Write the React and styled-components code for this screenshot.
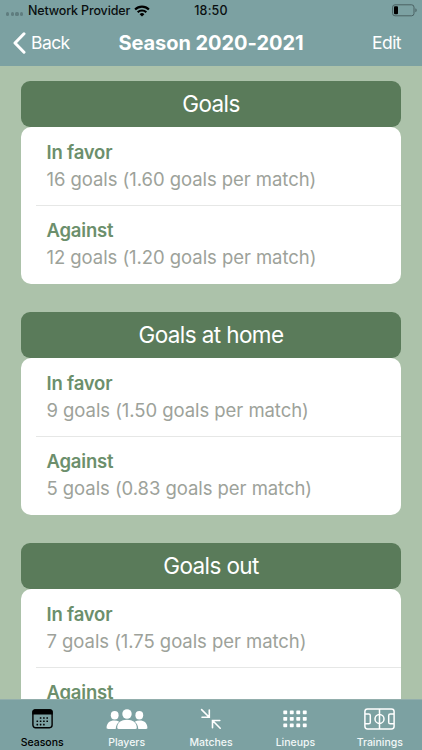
import React from 'react'
import styled, { createGlobalStyle } from 'styled-components'

const stats = [
  {
    title: 'Goals',
    rows: [
      ['In favor', '16 goals (1.60 goals per match)'],
      ['Against', '12 goals (1.20 goals per match)'],
    ],
  },
  {
    title: 'Goals at home',
    rows: [
      ['In favor', '9 goals (1.50 goals per match)'],
      ['Against', '5 goals (0.83 goals per match)'],
    ],
  },
  {
    title: 'Goals out',
    rows: [
      ['In favor', '7 goals (1.75 goals per match)'],
      ['Against'],
    ],
  },
]

const App = () => (
  <Screen>
    <GlobalStyle />
    <Header>
      <StatusBar>
        <Carrier>
          <Signal>
            <Dot />
            <Dot />
            <Dot />
            <Dot />
          </Signal>
          <Provider>Network Provider</Provider>
          <WifiIcon />
        </Carrier>
        <Clock>18:50</Clock>
        <Power>
          <BatteryIcon />
        </Power>
      </StatusBar>
      <NavBar>
        <BackButton>
          <BackIcon />
          Back
        </BackButton>
        <NavTitle>Season 2020-2021</NavTitle>
        <EditButton>Edit</EditButton>
      </NavBar>
    </Header>
    <Content>
      {stats.map(({ title, rows }) => (
        <Section key={title}>
          <SectionTitle>{title}</SectionTitle>
          <Card>
            {rows.map(([label, value]) => (
              <Row key={label}>
                <Label>{label}</Label>
                {value && <Value>{value}</Value>}
              </Row>
            ))}
          </Card>
        </Section>
      ))}
    </Content>
    <TabBar>
      {tabs.map(({ name, Icon }) => (
        <Tab key={name} $active={name === 'Seasons'}>
          <IconBox>
            <Icon />
          </IconBox>
          {name}
        </Tab>
      ))}
    </TabBar>
  </Screen>
)

const WifiIcon = () => (
  <svg width="16" height="12" viewBox="0 0 16 12" fill="none">
    <path d="M1.1 4.5a9.8 9.8 0 0 1 13.8 0" stroke="#000" strokeWidth="2.2" />
    <path d="M3.7 7.2a6.1 6.1 0 0 1 8.6 0" stroke="#000" strokeWidth="2.1" />
    <path d="M8 11.6 5.6 9.2a3.4 3.4 0 0 1 4.8 0z" fill="#000" />
  </svg>
)

const BatteryIcon = () => (
  <svg width="26" height="13" viewBox="0 0 26 13" fill="none">
    <rect x="0.6" y="0.8" width="21.4" height="11" rx="2.4" stroke="#4a6163" />
    <rect x="2" y="2.3" width="4" height="8" rx="1" fill="#000" />
    <path d="M23.4 4.3c1.7.6 1.7 3.4 0 4z" fill="#4a6163" />
  </svg>
)

const BackIcon = () => (
  <svg width="13" height="22" viewBox="0 0 13 22" fill="none">
    <path
      d="M11 1.8 2 11l9 9.2"
      stroke="#fff"
      strokeWidth="3"
      strokeLinecap="round"
      strokeLinejoin="round"
    />
  </svg>
)

const calendarDots = [
  [7.8, 9], [11.1, 9], [14.4, 9],
  [4.5, 12.3], [7.8, 12.3], [11.1, 12.3], [14.4, 12.3],
  [4.5, 15.6], [7.8, 15.6], [11.1, 15.6],
]

const SeasonsIcon = () => (
  <svg width="21" height="20" viewBox="0 0 21 20" fill="none">
    <rect x="0.9" y="0.9" width="19.2" height="17.8" rx="2.6" stroke="#000" strokeWidth="1.4" />
    <path d="M.3 5.6V3A2.8 2.8 0 0 1 3 .2h15A2.8 2.8 0 0 1 20.7 3v2.6z" fill="#000" />
    {calendarDots.map(([x, y]) => (
      <rect key={`${x}-${y}`} x={x} y={y - 0.8} width="1.6" height="1.6" rx="0.3" fill="#000" />
    ))}
  </svg>
)

const PlayersIcon = () => (
  <svg width="42" height="21" viewBox="0 0 42 21" fill="#fff">
    <ellipse cx="8.7" cy="6.2" rx="3.9" ry="4.2" />
    <ellipse cx="33.3" cy="6.2" rx="3.9" ry="4.2" />
    <path d="M.6 18.7c0-4.6 3.2-7.2 7.8-7.2 1.9 0 3.5.4 4.9 1.200-2 1.500-3.300 3.600-3.600 7.200H2C1 19.900.6 19.500.6 18.700z" />
    <path d="M41.4 18.700c0-4.600-3.200-7.200-7.800-7.200-1.900 0-3.500.4-4.900 1.200 2 1.500 3.300 3.600 3.600 7.200H40c1 0 1.400-.4 1.400-1.200z" />
    <ellipse cx="21" cy="5" rx="4.700" ry="4.800" />
    <path d="M11.200 18.700c0-4.900 4-7.900 9.800-7.900s9.800 3 9.800 7.900c0 .8-.4 1.200-1.400 1.200H12.600c-1 0-1.400-.4-1.400-1.200z" />
  </svg>
)

const MatchesIcon = () => (
  <svg width="22" height="22" viewBox="0 0 22 22" fill="none" stroke="#fff" strokeWidth="1.6">
    <path d="M1.6 1.6 9 9M9.3 2v7.300H2M20.200 20.200l-7.400-7.400M12.500 19.800v-7.300h7.300" strokeLinecap="round" />
  </svg>
)

const LineupsIcon = () => (
  <svg width="24" height="18" viewBox="0 0 24 18" fill="#fff">
    {[0.4, 6.9, 13.4].map(y =>
      [0.3, 6.8, 13.3, 19.8].map(x => (
        <rect key={`${x}-${y}`} x={x} y={y} width="3.9" height="3.9" rx="0.7" />
      ))
    )}
  </svg>
)

const TrainingsIcon = () => (
  <svg width="31" height="22" viewBox="0 0 31 22" fill="none" stroke="#fff" strokeWidth="1.5">
    <rect x="0.9" y="0.9" width="29.2" height="20" rx="2.6" />
    <path d="M15.5 1v20M1 6h3.700q1.600 0 1.600 1.600v6.600q0 1.600-1.600 1.600H1M30 6h-3.700q-1.600 0-1.600 1.600v6.600q0 1.600 1.600 1.600H30" />
    <circle cx="15.5" cy="10.9" r="4.5" />
  </svg>
)

const tabs = [
  { name: 'Seasons', Icon: SeasonsIcon },
  { name: 'Players', Icon: PlayersIcon },
  { name: 'Matches', Icon: MatchesIcon },
  { name: 'Lineups', Icon: LineupsIcon },
  { name: 'Trainings', Icon: TrainingsIcon },
]

const GlobalStyle = createGlobalStyle`
  * {
    box-sizing: border-box;
  }

  body {
    margin: 0;
    overflow: hidden;
    font-family: Inter, 'Liberation Sans', sans-serif;
  }

  svg {
    display: block;
    flex-shrink: 0;
  }
`

const Screen = styled.div`
  display: flex;
  flex-direction: column;
  width: 422px;
  height: 750px;
  background: #acc2aa;
`

const Header = styled.header`
  flex: 0 0 66px;
  background: #7ca1a2;
`

const StatusBar = styled.div`
  display: grid;
  grid-template-columns: 1fr auto 1fr;
  align-items: center;
  height: 21px;
  font-size: 12.5px;
  font-weight: 500;
  color: #0a0f10;
`

const Carrier = styled.div`
  display: flex;
  align-items: center;
  padding-left: 6px;
`

const Signal = styled.div`
  display: flex;
  gap: 1.5px;
  width: 22px;
  padding-top: 7px;
`

const Dot = styled.span`
  width: 3.2px;
  height: 3.2px;
  border-radius: 50%;
  background: #5f7d7f;
`

const Provider = styled.span`
  width: 106px;
  letter-spacing: -0.15px;
  white-space: nowrap;
`

const Clock = styled.span`
  letter-spacing: 0.2px;
`

const Power = styled.div`
  display: flex;
  justify-content: flex-end;
  padding-right: 4px;
`

const NavBar = styled.nav`
  display: grid;
  grid-template-columns: 1fr auto 1fr;
  align-items: center;
  height: 43px;
  color: #fff;
`

const NavButton = styled.button`
  display: flex;
  align-items: center;
  border: 0;
  background: none;
  font: inherit;
  font-size: 17.5px;
  letter-spacing: -0.55px;
  color: #fff;
`

const BackButton = styled(NavButton)`
  gap: 5px;
  padding: 0 0 0 13px;
`

const EditButton = styled(NavButton)`
  justify-self: end;
  padding: 0 21px 0 0;
`

const NavTitle = styled.h1`
  margin: 0;
  font-size: 20px;
  font-weight: 700;
  letter-spacing: -0.05px;
`

const Content = styled.main`
  flex: 1;
  min-height: 0;
  padding: 15px 21px 0;
  overflow: hidden;
`

const Section = styled.section`
  height: 231px;
`

const SectionTitle = styled.h2`
  margin: 0;
  height: 45.7px;
  border-radius: 9px;
  background: #5a7b5a;
  font-size: 22.5px;
  font-weight: 400;
  line-height: 46px;
  letter-spacing: -0.6px;
  text-align: center;
  color: #fff;
`

const Card = styled.div`
  height: 156.6px;
  margin-top: 0.3px;
  padding-left: 15px;
  border-radius: 10px;
  background: #fff;
`

const Row = styled.div`
  height: 78px;
  padding: 12px 0 0 10.5px;

  & + & {
    padding-top: 11px;
    border-top: 1px solid #e6e7e6;
  }
`

const Label = styled.div`
  font-size: 18.5px;
  font-weight: 600;
  line-height: 27px;
  letter-spacing: -0.2px;
  color: #6c8f6c;
`

const Value = styled.div`
  font-size: 18.5px;
  line-height: 27px;
  letter-spacing: -0.06px;
  white-space: nowrap;
  color: #9da29a;
`

const TabBar = styled.nav`
  display: grid;
  grid-template-columns: repeat(5, 1fr);
  flex: 0 0 51px;
  border-top: 1px solid #92aeac;
  background: #7ca1a2;
`

const Tab = styled.div`
  display: flex;
  flex-direction: column;
  align-items: center;
  font-size: 10.5px;
  font-weight: 500;
  line-height: 14px;
  letter-spacing: 0;
  color: ${props => (props.$active ? '#000' : '#f2f7f7')};
`

const IconBox = styled.div`
  display: flex;
  align-items: center;
  height: 36px;
  padding-top: 2px;
`

export default App
